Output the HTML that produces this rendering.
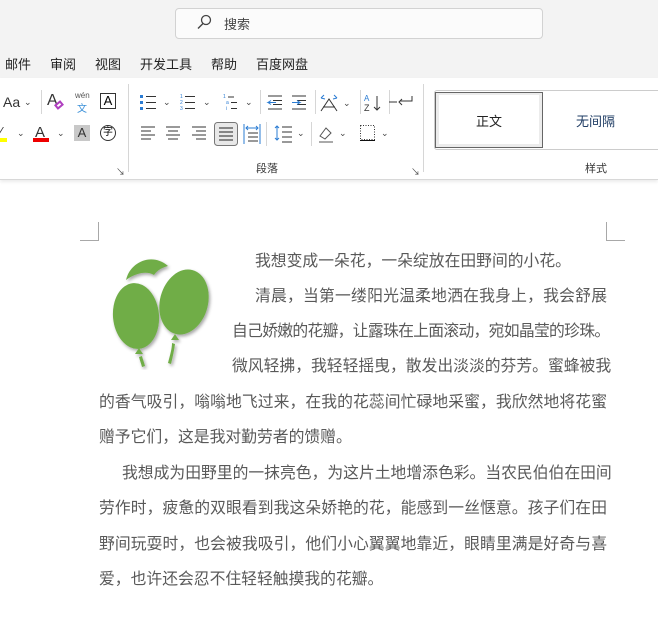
<!DOCTYPE html>
<html><head><meta charset="utf-8"><style>
*{margin:0;padding:0;box-sizing:border-box}
body{width:658px;height:629px;overflow:hidden;background:#fff;font-family:"Liberation Sans","Noto Sans CJK SC",sans-serif;position:relative}
.a{position:absolute;white-space:nowrap}
.top{position:absolute;left:0;top:0;width:658px;height:78px;background:#f3f3f3}
.rib{position:absolute;left:0;top:78px;width:658px;height:102px;background:#fff;border-bottom:1px solid #d8d8d8;box-shadow:0 2px 3px rgba(0,0,0,.08)}
.menu{font-size:13px;color:#222;top:54px}
.ic{position:absolute;font-size:13px;color:#333}
.sep{position:absolute;width:1px;background:#d6d6d6}
.t{position:absolute;font-size:15.8px;color:#595959;white-space:nowrap;text-align:justify;text-align-last:justify;height:20px;line-height:20px}
.dd{position:absolute;font-size:9px;color:#444}
</style></head><body>
<div class="top"></div>
<div class="a" style="left:175px;top:8px;width:368px;height:31px;background:#fbfbfb;border:1px solid #d2d2d2;border-radius:4px"></div>
<svg class="a" style="left:196px;top:14px" width="16" height="16"><circle cx="10" cy="6" r="4.5" fill="none" stroke="#444" stroke-width="1.3"/><path d="M7 9.5 L2 14.5" stroke="#444" stroke-width="1.4"/></svg>
<div class="a" style="left:224px;top:14px;font-size:13px;color:#444">搜索</div>
<div class="a menu" style="left:5px">邮件</div>
<div class="a menu" style="left:50px">审阅</div>
<div class="a menu" style="left:95px">视图</div>
<div class="a menu" style="left:140px">开发工具</div>
<div class="a menu" style="left:211px">帮助</div>
<div class="a menu" style="left:256px">百度网盘</div>
<div class="rib"></div>
<div class="sep" style="left:128px;top:84px;height:88px"></div>
<div class="sep" style="left:423px;top:84px;height:88px"></div>
<div class="sep" style="left:41px;top:90px;height:24px"></div>
<div class="sep" style="left:260px;top:90px;height:24px"></div>
<div class="sep" style="left:315px;top:90px;height:24px"></div>
<div class="sep" style="left:360px;top:90px;height:24px"></div>
<div class="sep" style="left:389px;top:90px;height:24px"></div>
<div class="sep" style="left:266px;top:122px;height:24px"></div>
<div class="sep" style="left:311px;top:122px;height:24px"></div>
<div class="ic" style="left:3px;top:94px;font-size:14px">Aa</div><div class="dd" style="left:24px;top:97px">⌄</div>
<div class="ic" style="left:47px;top:92px;font-size:16px">A</div><div class="a" style="left:55px;top:102px;width:8px;height:6px;border:2px solid #b040c0;transform:rotate(-40deg)"></div>
<div class="a" style="left:75px;top:91px;font-size:8px;color:#555">wén</div><div class="a" style="left:77px;top:100px;font-size:10px;color:#3a8fd8">文</div>
<div class="a" style="left:100px;top:93px;width:16px;height:16px;border:1px solid #333;font-size:13px;text-align:center;line-height:14px">A</div>
<div class="a" style="left:0;top:138px;width:7px;height:4px;background:#ff0"></div><div class="ic" style="left:0;top:124px">⁄</div>
<div class="dd" style="left:17px;top:128px">⌄</div>
<div class="ic" style="left:35px;top:124px;font-size:15px">A</div><div class="a" style="left:33px;top:138px;width:16px;height:4px;background:#e00"></div>
<div class="dd" style="left:57px;top:128px">⌄</div>
<div class="a" style="left:74px;top:125px;width:16px;height:16px;background:#c8c8c8;font-size:13px;text-align:center;line-height:16px;color:#333">A</div>
<div class="a" style="left:100px;top:125px;width:16px;height:16px;border:1px solid #333;border-radius:50%;font-size:10px;text-align:center;line-height:14px">字</div>
<div class="a" style="left:116px;top:165px;font-size:9px;color:#444">↘</div>
<svg class="a" style="left:138px;top:92px" width="120" height="20">
<g fill="#2b7cd3"><rect x="2" y="3" width="3" height="3"/><rect x="2" y="9" width="3" height="3"/><rect x="2" y="15" width="3" height="3"/></g>
<g stroke="#333"><path d="M8 4.5h10M8 10.5h10M8 16.5h10"/><path d="M47 4.5h10M47 10.5h10M47 16.5h10"/><path d="M90 5h6M93 10.5h6M93 16.5h6"/></g>
<g fill="#2b7cd3" font-size="5"><text x="42" y="6">1</text><text x="42" y="12">2</text><text x="42" y="18">3</text><text x="85" y="6">1</text><text x="88" y="12">a</text><text x="88" y="18">i</text></g>
<g fill="#444" font-size="9"><text x="25" y="13">⌄</text><text x="65" y="13">⌄</text><text x="107" y="13">⌄</text></g>
</svg>
<svg class="a" style="left:265px;top:92px" width="150" height="22">
<g stroke="#333"><path d="M3 4h14M8 8.5h9M8 12.5h9M3 17h14"/><path d="M27 4h14M32 8.5h9M32 12.5h9M27 17h14"/></g>
<g stroke="#2b7cd3" fill="none"><path d="M11 10.5H3l3-2M3 10.5l3 2"/><path d="M27 10.5h8l-3-2M35 10.5l-3 2"/><path d="M56 6l3-3M56 6l4 1M72 6l-3-3M72 6l-4 1"/></g>
<path d="M56 19l8-12 8 12M58 15h12" stroke="#333" fill="none"/>
<text x="78" y="14" font-size="9" fill="#444">⌄</text>
<text x="99" y="9" font-size="8" fill="#2b7cd3">A</text><text x="99" y="19" font-size="9" fill="#333">Z</text>
<path d="M112 4v14M109 15l3 3 3-3" stroke="#333" fill="none"/>
<path d="M147 4v5h-12M137 7l-3 3 3 3M124 10h8" stroke="#333" fill="none"/>
</svg>
<svg class="a" style="left:138px;top:122px" width="280" height="24">
<g stroke="#333"><path d="M3 5h14M3 9h10M3 13h14M3 17h10"/><path d="M28 5h14M30 9h10M28 13h14M30 17h10"/><path d="M54 5h14M58 9h10M54 13h14M58 17h10"/></g>
<rect x="76.5" y="0.5" width="23" height="23" rx="3" fill="#e8e8e8" stroke="#777"/>
<path d="M81 6h14M81 10h14M81 14h14M81 18h14" stroke="#222"/>
<g stroke="#2b7cd3" fill="none"><path d="M106 2v20M122 2v20M108 6h12M110 4l-2 2 2 2M118 4l2 2-2 2"/></g>
<path d="M110 11h10M110 15h10M110 19h10" stroke="#333"/>
<g stroke="#2b7cd3" fill="none"><path d="M139 4v14M137 6l2-2 2 2M137 16l2 2 2-2"/></g>
<path d="M144 5h10M144 10h10M144 15h10M144 20h10" stroke="#333"/>
<text x="159" y="14" font-size="9" fill="#444">⌄</text>
<path d="M182 14l6-8 5 5-6 6zM181 20h14" stroke="#555" fill="none"/>
<text x="201" y="14" font-size="9" fill="#444">⌄</text>
<rect x="222.5" y="3.5" width="14" height="14" fill="none" stroke="#333" stroke-dasharray="1 1.5"/><path d="M222 18.5h15" stroke="#111"/>
<text x="243" y="14" font-size="9" fill="#444">⌄</text>
</svg>
<div class="a" style="left:256px;top:160px;font-size:11px;color:#333">段落</div>
<div class="a" style="left:411px;top:165px;font-size:9px;color:#444">↘</div>
<div class="a" style="left:434px;top:90px;width:230px;height:60px;border:1px solid #ccc;border-radius:3px"></div>
<div class="a" style="left:435px;top:92px;width:108px;height:56px;border:1px solid #666;background:#ececec"></div>
<div class="a" style="left:439px;top:95px;width:100px;height:49px;background:#fff"></div>
<div class="a" style="left:476px;top:111px;font-size:13px;color:#222">正文</div>
<div class="a" style="left:576px;top:111px;font-size:13px;color:#1f3c64">无间隔</div>
<div class="a" style="left:585px;top:160px;font-size:11px;color:#333">样式</div>
<div class="a" style="left:80px;top:222px;width:19px;height:19px;border-right:1px solid #a8a8a8;border-bottom:1px solid #a8a8a8"></div>
<div class="a" style="left:606px;top:222px;width:19px;height:19px;border-left:1px solid #a8a8a8;border-bottom:1px solid #a8a8a8"></div>
<svg class="a" style="left:100px;top:250px" width="120" height="120">
<defs><filter id="s"><feDropShadow dx="1.5" dy="2" stdDeviation="1.5" flood-opacity=".35"/></filter></defs>
<g fill="#70ad47" filter="url(#s)">
<path d="M26 30 C30 12 52 2 68 16 C60 18 56 22 54 25 C46 20 34 24 26 30Z"/>
<ellipse cx="36" cy="66" rx="23" ry="33" transform="rotate(-5 36 66)"/>
<path d="M39 98 l-4 6 h8z"/>
<path d="M42 106 c1 4 2 6 3 10 l-3 1 c-1-4-2-6-3-10z"/>
<ellipse cx="84" cy="52" rx="24" ry="33" transform="rotate(15 84 52)"/>
<path d="M75 84 l-4 6 h8z"/>
<path d="M72 93 c0 6 -2 12 -4 20 l3 1 c2-8 3-13 4-20z"/>
</g>
</svg>
<div class="t" style="left:255px;top:252px;text-align-last:left">我想变成一朵花，一朵绽放在田野间的小花。</div>
<div class="t" style="left:255px;top:287px;width:352px">清晨，当第一缕阳光温柔地洒在我身上，我会舒展</div>
<div class="t" style="left:232px;top:322px;width:375px;letter-spacing:-0.7px">自己娇嫩的花瓣，让露珠在上面滚动，宛如晶莹的珍珠。</div>
<div class="t" style="left:232px;top:357px;width:375px">微风轻拂，我轻轻摇曳，散发出淡淡的芬芳。蜜蜂被我</div>
<div class="t" style="left:99px;top:393px;width:508px">的香气吸引，嗡嗡地飞过来，在我的花蕊间忙碌地采蜜，我欣然地将花蜜</div>
<div class="t" style="left:99px;top:428px;text-align-last:left">赠予它们，这是我对勤劳者的馈赠。</div>
<div class="t" style="left:122px;top:464px;width:485px">我想成为田野里的一抹亮色，为这片土地增添色彩。当农民伯伯在田间</div>
<div class="t" style="left:99px;top:499px;width:508px">劳作时，疲惫的双眼看到我这朵娇艳的花，能感到一丝惬意。孩子们在田</div>
<div class="t" style="left:99px;top:535px;width:508px">野间玩耍时，也会被我吸引，他们小心翼翼地靠近，眼睛里满是好奇与喜</div>
<div class="t" style="left:99px;top:570px;text-align-last:left">爱，也许还会忍不住轻轻触摸我的花瓣。</div>
</body></html>
